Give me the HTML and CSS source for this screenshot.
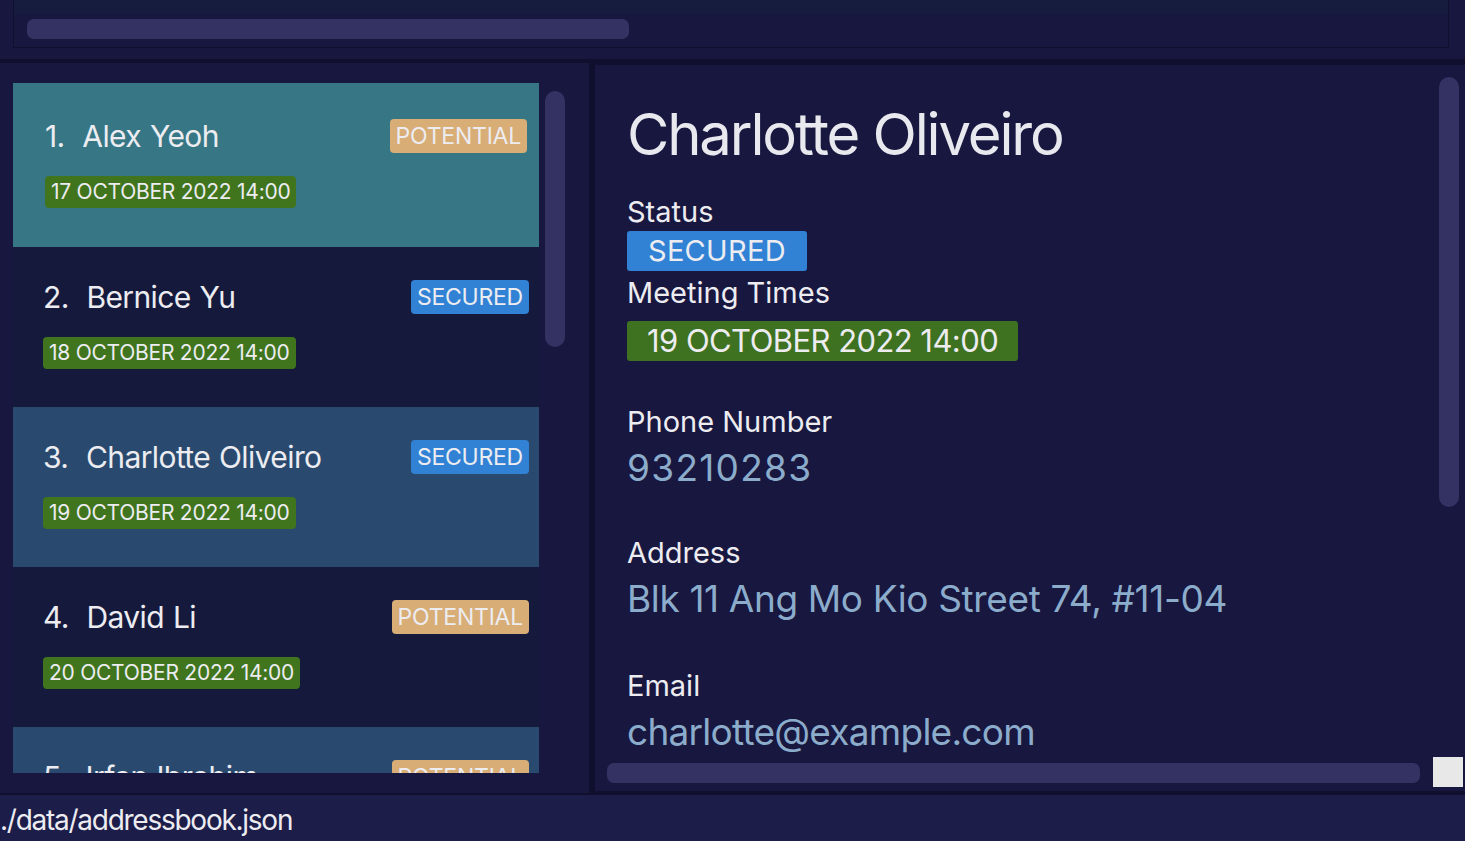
FILE: index.html
```html
<!DOCTYPE html>
<html lang="en">
<head>
<meta charset="utf-8">
<title>Address Book</title>
<link rel="stylesheet" href="styles.css">
</head>
<body>
<div class="app">
  <header class="top">
    <div class="result-box">
      <div class="result-strip"></div>
      <div class="result-hbar"></div>
    </div>
  </header>

  <main class="main">
    <section class="list-panel">
      <div class="list-viewport">
        <div class="card card-selected">
          <div class="card-head">
            <span class="card-name">1.  Alex Yeoh</span>
            <span class="tag tag-potential">POTENTIAL</span>
          </div>
          <span class="date">17 OCTOBER 2022 14:00</span>
        </div>
        <div class="card card-even">
          <div class="card-head">
            <span class="card-name">2.  Bernice Yu</span>
            <span class="tag tag-secured">SECURED</span>
          </div>
          <span class="date">18 OCTOBER 2022 14:00</span>
        </div>
        <div class="card card-odd">
          <div class="card-head">
            <span class="card-name">3.  Charlotte Oliveiro</span>
            <span class="tag tag-secured">SECURED</span>
          </div>
          <span class="date">19 OCTOBER 2022 14:00</span>
        </div>
        <div class="card card-even">
          <div class="card-head">
            <span class="card-name">4.  David Li</span>
            <span class="tag tag-potential">POTENTIAL</span>
          </div>
          <span class="date">20 OCTOBER 2022 14:00</span>
        </div>
        <div class="card card-odd">
          <div class="card-head">
            <span class="card-name">5.  Irfan Ibrahim</span>
            <span class="tag tag-potential">POTENTIAL</span>
          </div>
        </div>
      </div>
      <div class="list-vbar"></div>
    </section>

    <div class="divider"></div>

    <section class="detail-panel">
      <div class="detail-content">
        <h1 class="detail-title">Charlotte Oliveiro</h1>
        <div class="label label-status">Status</div>
        <div class="big-tag big-secured">SECURED</div>
        <div class="label label-meet">Meeting Times</div>
        <div class="big-tag big-date">19 OCTOBER 2022 14:00</div>
        <div class="label label-phone">Phone Number</div>
        <div class="value value-phone">93210283</div>
        <div class="label label-address">Address</div>
        <div class="value">Blk 11 Ang Mo Kio Street 74, #11-04</div>
        <div class="label label-email">Email</div>
        <div class="value value-email">charlotte@example.com</div>
      </div>
      <div class="detail-vbar"></div>
      <div class="detail-hbar"></div>
      <div class="detail-corner"></div>
    </section>
  </main>

  <footer class="status">./data/addressbook.json</footer>
</div>
</body>
</html>
```

FILE: styles.css
```css
* { box-sizing: border-box; }

html, body {
  margin: 0;
  padding: 0;
  background: #110f2e;
}

body {
  font-family: Inter, "Noto Sans", sans-serif;
  color: #ececf1;
}

.app {
  width: 1465px;
  height: 841px;
  display: flex;
  flex-direction: column;
  overflow: hidden;
}

/* ---------- top result box ---------- */
.top {
  flex: none;
  height: 59px;
  background: #18173f;
}

.result-box {
  margin-left: 13px;
  width: 1436px;
  height: 48px;
  border: 1px solid #110f2e;
  border-top: none;
  background: #18173f;
  display: flex;
  flex-direction: column;
}

.result-strip {
  height: 13px;
  background: #161c3e;
}

.result-hbar {
  margin: 6px 0 0 13px;
  width: 602px;
  height: 20px;
  border-radius: 7px;
  background: #343263;
}

/* ---------- main area ---------- */
.main {
  flex: none;
  margin-top: 4px;
  height: 730px;
  display: flex;
}

.list-panel {
  flex: none;
  width: 589px;
  background: #18173f;
  padding: 20px 0 0 13px;
  display: flex;
  align-items: flex-start;
}

.list-viewport {
  width: 526px;
  height: 690px;
  overflow: hidden;
  flex: none;
}

.list-vbar {
  flex: none;
  margin: 8px 0 0 6px;
  width: 20px;
  height: 256px;
  border-radius: 10px;
  background: #343263;
}

.card {
  height: 160px;
  padding: 33px 10px 0 30px;
  display: flex;
  flex-direction: column;
  align-items: flex-start;
}

.card-selected {
  height: 164px;
  background: #377785;
  border: 2px solid #377785;
  padding-top: 34px;
}

.card-even { background: #151a3d; }
.card-odd { background: #294a6e; }

.card-head {
  width: 100%;
  height: 34px;
  display: flex;
  justify-content: space-between;
  align-items: center;
}

.card-name {
  white-space: pre;
  font-size: 30px;
  line-height: 34px;
  letter-spacing: -0.02em;
  word-spacing: 1px;
  color: #ececf1;
}

.tag {
  height: 34px;
  line-height: 34px;
  padding: 0 6px;
  border-radius: 4px;
  font-size: 23px;
  letter-spacing: -0.01em;
  color: #ececf1;
}

.tag-potential { background: #d8ad76; }
.tag-secured { background: #3182d5; }

.date {
  margin-top: 23px;
  height: 32px;
  line-height: 32px;
  padding: 0 6px;
  border-radius: 4px;
  font-size: 21px;
  letter-spacing: -0.012em;
  background: #40751e;
  color: #ececf1;
}

.divider {
  flex: none;
  width: 6px;
}

/* ---------- detail panel ---------- */
.detail-panel {
  flex: none;
  width: 870px;
  margin: 2px 0;
  height: 726px;
  background: #18173f;
  position: relative;
  overflow: hidden;
}

.detail-content {
  padding: 34px 0 0 32px;
  display: flex;
  flex-direction: column;
  align-items: flex-start;
}

.detail-title {
  margin: 0;
  font-weight: 400;
  font-size: 58px;
  line-height: 70px;
  letter-spacing: -0.037em;
  color: #e8e8ef;
}

.label {
  font-size: 29px;
  line-height: 34px;
  color: #ececf1;
}

.label-status { margin-top: 26px; }
.label-meet { margin-top: 5px; }
.label-phone { margin-top: 44px; }
.label-address { margin-top: 46px; }
.label-email { margin-top: 48px; }

.big-tag {
  height: 40px;
  line-height: 40px;
  border-radius: 3px;
  color: #ececf1;
}

.big-secured {
  margin-top: 2px;
  padding: 0 21px 0 21px;
  font-size: 29px;
  letter-spacing: 0.01em;
  background: #3182d5;
}

.big-date {
  margin-top: 11px;
  padding: 0 20px;
  font-size: 31px;
  letter-spacing: -0.018em;
  background: #3e7120;
}

.value {
  margin-top: 6px;
  font-size: 37px;
  line-height: 45px;
  letter-spacing: -0.01em;
  color: #8caccb;
  white-space: nowrap;
}

.value-phone { letter-spacing: 0.035em; }
.value-email { letter-spacing: -0.02em; }

/* overlay scrollbars */
.detail-vbar {
  position: absolute;
  left: 844px;
  top: 12px;
  width: 20px;
  height: 430px;
  border-radius: 10px;
  background: #343263;
}

.detail-hbar {
  position: absolute;
  left: 12px;
  top: 698px;
  width: 813px;
  height: 20px;
  border-radius: 7px;
  background: #343263;
}

.detail-corner {
  position: absolute;
  left: 838px;
  top: 692px;
  width: 30px;
  height: 30px;
  background: #e8e8e8;
}

/* ---------- status bar ---------- */
.status {
  flex: none;
  margin-top: 2px;
  height: 46px;
  padding-top: 5px;
  line-height: 41px;
  font-size: 28px;
  letter-spacing: -0.045em;
  background: #1d1d49;
  color: #ececf1;
  white-space: nowrap;
}
```
